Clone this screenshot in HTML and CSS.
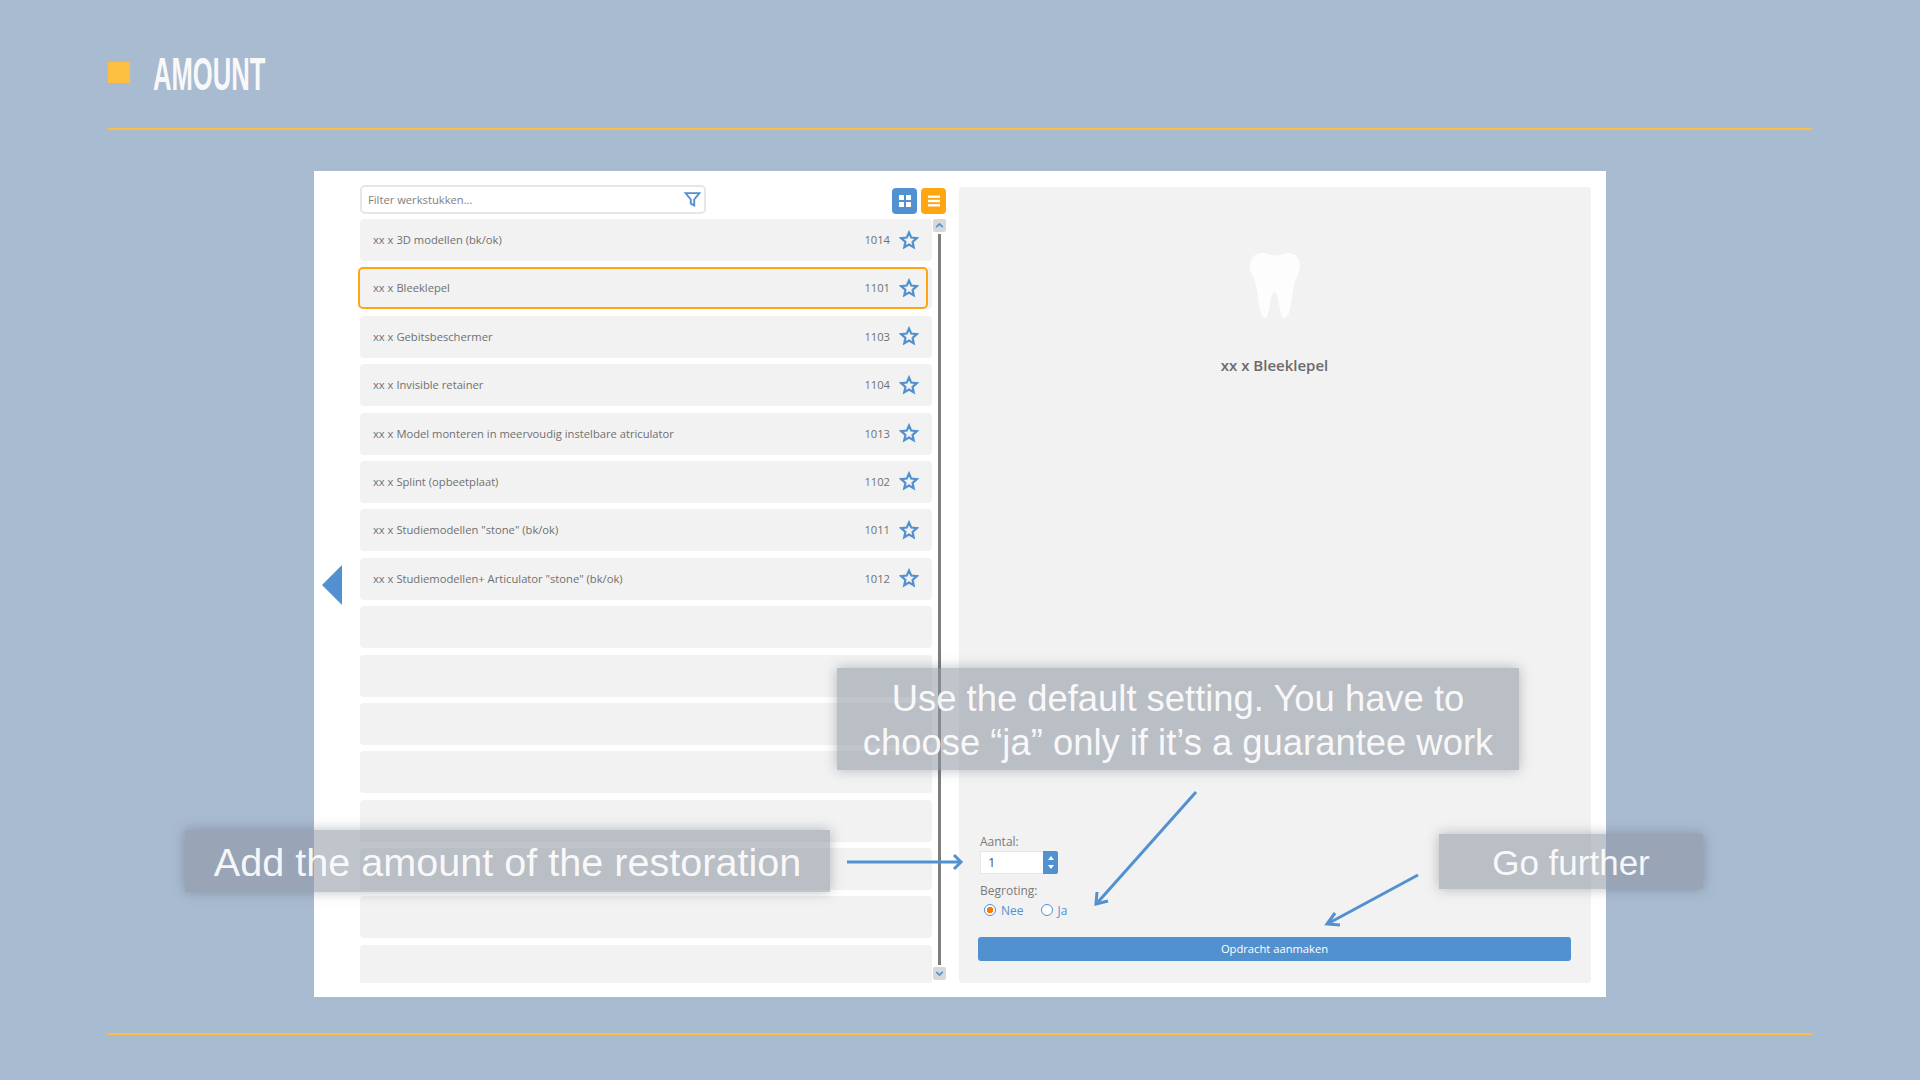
FILE: index.html
```html
<!DOCTYPE html>
<html lang="en">

<head>
    <meta charset="UTF-8">
    <title>Amount</title>
    <link rel="stylesheet" href="styles.css">
</head>

<body>
    <div class="slide">
        <div class="head">
            <span class="head-mark"></span>
            <h1 class="head-title">AMOUNT</h1>
        </div>

        <div class="card">
            <div class="back"><span class="back-arrow"></span></div>

            <div class="left">
                <div class="toolbar">
                    <div class="filter">
                        <span class="filter-text">Filter werkstukken...</span>
                        <svg class="filter-icon" viewBox="0 0 16 16"><path d="M1.5 2h13L9.6 8v5.5l-3.2-1.6V8z" /></svg>
                    </div>
                    <div class="views">
                        <span class="view view-blue">
                            <svg viewBox="0 0 14 14"><rect x="1" y="1" width="5" height="5" /><rect x="8" y="1" width="5" height="5" /><rect x="1" y="8" width="5" height="5" /><rect x="8" y="8" width="5" height="5" /></svg>
                        </span>
                        <span class="view view-orange">
                            <svg viewBox="0 0 14 14"><rect x="1" y="1.5" width="12" height="2.4" /><rect x="1" y="5.8" width="12" height="2.4" /><rect x="1" y="10.1" width="12" height="2.4" /></svg>
                        </span>
                    </div>
                </div>

                <div class="list-wrap">
                    <ul class="list">
                        <li class="row"><span class="row-name">xx x 3D modellen (bk/ok)</span><span class="row-code">1014</span><svg class="star" viewBox="0 0 24 24"><path d="M12 3l2.7 6.1 6.6.7-5 4.4 1.4 6.5L12 17.4l-5.7 3.3 1.4-6.5-5-4.4 6.6-.7z" /></svg></li>
                        <li class="row row-active"><span class="row-name">xx x Bleeklepel</span><span class="row-code">1101</span><svg class="star" viewBox="0 0 24 24"><path d="M12 3l2.7 6.1 6.6.7-5 4.4 1.4 6.5L12 17.4l-5.7 3.3 1.4-6.5-5-4.4 6.6-.7z" /></svg></li>
                        <li class="row"><span class="row-name">xx x Gebitsbeschermer</span><span class="row-code">1103</span><svg class="star" viewBox="0 0 24 24"><path d="M12 3l2.7 6.1 6.6.7-5 4.4 1.4 6.5L12 17.4l-5.7 3.3 1.4-6.5-5-4.4 6.6-.7z" /></svg></li>
                        <li class="row"><span class="row-name">xx x Invisible retainer</span><span class="row-code">1104</span><svg class="star" viewBox="0 0 24 24"><path d="M12 3l2.7 6.1 6.6.7-5 4.4 1.4 6.5L12 17.4l-5.7 3.3 1.4-6.5-5-4.4 6.6-.7z" /></svg></li>
                        <li class="row"><span class="row-name">xx x Model monteren in meervoudig instelbare atriculator</span><span class="row-code">1013</span><svg class="star" viewBox="0 0 24 24"><path d="M12 3l2.7 6.1 6.6.7-5 4.4 1.4 6.5L12 17.4l-5.7 3.3 1.4-6.5-5-4.4 6.6-.7z" /></svg></li>
                        <li class="row"><span class="row-name">xx x Splint (opbeetplaat)</span><span class="row-code">1102</span><svg class="star" viewBox="0 0 24 24"><path d="M12 3l2.7 6.1 6.6.7-5 4.4 1.4 6.5L12 17.4l-5.7 3.3 1.4-6.5-5-4.4 6.6-.7z" /></svg></li>
                        <li class="row"><span class="row-name">xx x Studiemodellen "stone" (bk/ok)</span><span class="row-code">1011</span><svg class="star" viewBox="0 0 24 24"><path d="M12 3l2.7 6.1 6.6.7-5 4.4 1.4 6.5L12 17.4l-5.7 3.3 1.4-6.5-5-4.4 6.6-.7z" /></svg></li>
                        <li class="row"><span class="row-name">xx x Studiemodellen+ Articulator "stone" (bk/ok)</span><span class="row-code">1012</span><svg class="star" viewBox="0 0 24 24"><path d="M12 3l2.7 6.1 6.6.7-5 4.4 1.4 6.5L12 17.4l-5.7 3.3 1.4-6.5-5-4.4 6.6-.7z" /></svg></li>
                        <li class="row"></li>
                        <li class="row"></li>
                        <li class="row"></li>
                        <li class="row"></li>
                        <li class="row"></li>
                        <li class="row"></li>
                        <li class="row"></li>
                        <li class="row"></li>
                    </ul>
                    <div class="scroll">
                        <span class="scroll-btn"><svg viewBox="0 0 12 12"><path d="M3 7.5L6 4.5l3 3" /></svg></span>
                        <span class="scroll-track"></span>
                        <span class="scroll-btn"><svg viewBox="0 0 12 12"><path d="M3 4.5L6 7.5l3-3" /></svg></span>
                    </div>
                </div>
            </div>

            <div class="detail">
                <svg class="tooth" viewBox="0 0 50 68"><path d="M12 1C5 1 0 6 0 14c0 7 4 11 6 19 2 9 2 17 4 24 1 5 3 9 5 9 3 0 4-8 5-14 1-6 2-12 4.500-12s3.500 6 4.500 12c1 6 2 14 5 14 3 0 5-4 6-9 2-7 2-15 4-24 2-8 6-12 6-19 0-8-5-13-12-13-5 0-8 2.500-13 2.500S17 1 12 1z" /></svg>
                <div class="detail-name">xx x Bleeklepel</div>

                <div class="form">
                    <label class="form-label">Aantal:</label>
                    <div class="spinner">
                        <span class="spinner-value">1</span>
                        <span class="spinner-btns"><i class="up"></i><i class="down"></i></span>
                    </div>
                    <label class="form-label form-label-next">Begroting:</label>
                    <div class="radios">
                        <span class="radio radio-on"></span><span class="radio-text">Nee</span>
                        <span class="radio"></span><span class="radio-text">Ja</span>
                    </div>
                </div>
                <div class="submit">Opdracht aanmaken</div>
            </div>
        </div>

        <div class="foot-line"></div>

        <!-- uitleg over de screenshot heen -->
        <div class="note note-amount">Add the amount of the restoration</div>
        <div class="note note-default">Use the default setting. You have to<br>choose “ja” only if it’s a guarantee work</div>
        <div class="note note-further">Go further</div>

        <svg class="arrows" viewBox="0 0 1920 1080">
            <path d="M847 862H960" />
            <path d="M954 855l7 7-7 7" />
            <path d="M1196 792L1098 902" />
            <path d="M1097 892L1096 904 1108 901" />
            <path d="M1418 875L1329 923" />
            <path d="M1335 913L1327 924 1340 925" />
        </svg>
    </div>
</body>

</html>
```

FILE: styles.css
```css
* {
    padding: 0;
    margin: 0;
    list-style: none;
    box-sizing: border-box;
}

body {
    width: 1920px;
    height: 1080px;
    overflow: hidden;
    background: #a9bbd1;
    font-family: "Open Sans", "Liberation Sans", sans-serif;
}

.slide {
    position: relative;
    width: 1920px;
    height: 1080px;
    padding: 0 108px;
}

.head {
    display: flex;
    align-items: center;
    height: 130px;
    padding-top: 44px;
    padding-bottom: 20px;
    border-bottom: 2px solid #fcbf40;
}

.head-mark {
    width: 22px;
    height: 21px;
    margin-right: 23px;
    margin-top: -7px;
    background: #fcbf40;
}

.head-title {
    margin-top: -5px;
    font-family: "Liberation Sans", sans-serif;
    font-size: 46px;
    line-height: 46px;
    font-weight: bold;
    color: #f8f8f8;
    transform: scaleX(0.557);
    transform-origin: left center;
}

.card {
    display: flex;
    width: 1292px;
    height: 826px;
    margin: 41px 0 0 206px;
    background: #fff;
}

.back {
    display: flex;
    align-items: flex-start;
    width: 46px;
    padding: 394px 0 0 8px;
}

.back-arrow {
    width: 0;
    height: 0;
    border-top: 20px solid transparent;
    border-bottom: 20px solid transparent;
    border-right: 20px solid #5291d0;
}

.left {
    width: 586px;
    padding-top: 14px;
}

.toolbar {
    display: flex;
    justify-content: space-between;
    height: 34px;
    padding-right: 0;
}

.filter {
    display: flex;
    align-items: center;
    justify-content: space-between;
    width: 346px;
    height: 29px;
    padding: 0 3px 0 6px;
    background: #fff;
    border: 2px solid #e6e6e6;
    border-radius: 5px;
}

.filter-text {
    font-size: 11.2px;
    color: #808080;
}

.filter-icon {
    width: 17px;
    height: 17px;
    fill: none;
    stroke: #5291d0;
    stroke-width: 1.8;
}

.views {
    display: flex;
    gap: 4px;
    padding-top: 3px;
}

.view {
    display: flex;
    align-items: center;
    justify-content: center;
    width: 25px;
    height: 26px;
    border-radius: 4px;
}

.view svg {
    width: 14px;
    height: 14px;
    fill: #fff;
}

.view-blue {
    background: #5291d0;
}

.view-orange {
    background: #ffa510;
}

.list-wrap {
    display: flex;
    height: 764px;
}

.list {
    width: 574px;
    margin-left: -2px;
    padding-left: 2px;
    overflow: hidden;
}

.row {
    position: relative;
    display: flex;
    align-items: center;
    height: 42px;
    margin-bottom: 6.4px;
    padding: 0 13px 1px 13px;
    background: #f2f2f2;
    border-radius: 4px;
    font-size: 11.2px;
    color: #707070;
}

.row-active::after {
    content: "";
    position: absolute;
    left: -2px;
    right: 4px;
    top: 0;
    bottom: 0;
    border: 2px solid #ffa510;
    border-radius: 5px;
}

.row-name {
    flex: 1;
}

.row-code {
    margin-right: 9px;
}

.star {
    width: 20px;
    height: 20px;
    fill: none;
    stroke: #5291d0;
    stroke-width: 2.6;
}

.scroll {
    display: flex;
    flex-direction: column;
    align-items: center;
    width: 13px;
    height: 761px;
    margin-left: 1px;
}

.scroll-btn {
    width: 13px;
    height: 13px;
    background: #d8d8d8;
    border-radius: 2px;
}

.scroll-btn svg {
    display: block;
    width: 13px;
    height: 13px;
    fill: none;
    stroke: #5291d0;
    stroke-width: 1.5;
}

.scroll-track {
    flex: 1;
    width: 3px;
    margin: 2px 0;
    background: #7d7d7d;
}

.detail {
    display: flex;
    flex-direction: column;
    width: 632px;
    height: 796px;
    margin: 16px 0 0 13px;
    padding: 0 20px 22px 19px;
    background: #f2f2f2;
    border-radius: 4px;
}

.tooth {
    align-self: center;
    width: 50px;
    height: 68px;
    margin-top: 65px;
    fill: #fdfdfd;
}

.detail-name {
    margin-top: 35px;
    text-align: center;
    font-size: 15px;
    font-weight: 600;
    color: #6b6b6b;
}

.form {
    flex: 1;
    display: flex;
    flex-direction: column;
    justify-content: flex-end;
    padding: 0 0 17px 2px;
    font-size: 12px;
    color: #7a7a7a;
}

.form-label {
    line-height: 16px;
}

.form-label-next {
    margin-top: 9px;
}

.spinner {
    display: flex;
    width: 78px;
    height: 23px;
    margin-top: 1px;
    background: #fff;
    border: 1px solid #e6e6e6;
    border-right: 0;
    border-radius: 2px;
}

.spinner-value {
    flex: 1;
    padding-left: 7px;
    line-height: 21px;
    color: #555;
    font-size: 13px;
}

.spinner-btns {
    display: flex;
    flex-direction: column;
    align-items: center;
    justify-content: center;
    gap: 5px;
    width: 15px;
    margin: -1px 0;
    background: #5291d0;
    border-radius: 0 2px 2px 0;
}

.spinner-btns i {
    width: 0;
    height: 0;
    border-left: 3px solid transparent;
    border-right: 3px solid transparent;
}

.spinner-btns .up {
    border-bottom: 4px solid #fff;
}

.spinner-btns .down {
    border-top: 4px solid #fff;
}

.radios {
    display: flex;
    align-items: center;
    height: 20px;
    padding-left: 4px;
    margin-top: 1px;
}

.radio {
    width: 12px;
    height: 12px;
    background: #fff;
    border: 1px solid #5291d0;
    border-radius: 50%;
}

.radio-on {
    background: radial-gradient(circle, #ff7a00 0 3px, #fff 3.5px);
}

.radio-text {
    margin: 0 17px 0 5px;
    color: #5291d0;
}

.submit {
    width: 593px;
    height: 24px;
    line-height: 24px;
    background: #5291d0;
    border-radius: 3px;
    text-align: center;
    font-size: 11.2px;
    color: #fff;
}

.foot-line {
    height: 2px;
    margin-top: 36px;
    background: #fcbf40;
}

/* notes */
.note {
    position: absolute;
    display: flex;
    align-items: center;
    justify-content: center;
    text-align: center;
    background: rgba(140, 148, 160, 0.55);
    box-shadow: 0 0 12px rgba(60, 70, 90, 0.35);
    font-family: "Liberation Sans", Arial, sans-serif;
    color: rgba(255, 255, 255, 0.92);
}

.note-amount {
    left: 185px;
    top: 830px;
    width: 645px;
    height: 62px;
    padding-top: 2px;
    font-size: 39.6px;
}

.note-default {
    left: 837px;
    top: 668px;
    width: 682px;
    height: 102px;
    padding-top: 4px;
    font-size: 36.4px;
    line-height: 44px;
}

.note-further {
    left: 1439px;
    top: 834px;
    width: 264px;
    height: 55px;
    padding-top: 2px;
    font-size: 35px;
}

.arrows {
    position: absolute;
    left: 0;
    top: 0;
    width: 1920px;
    height: 1080px;
    fill: none;
    stroke: #5291d0;
    stroke-width: 3;
    pointer-events: none;
}
```
